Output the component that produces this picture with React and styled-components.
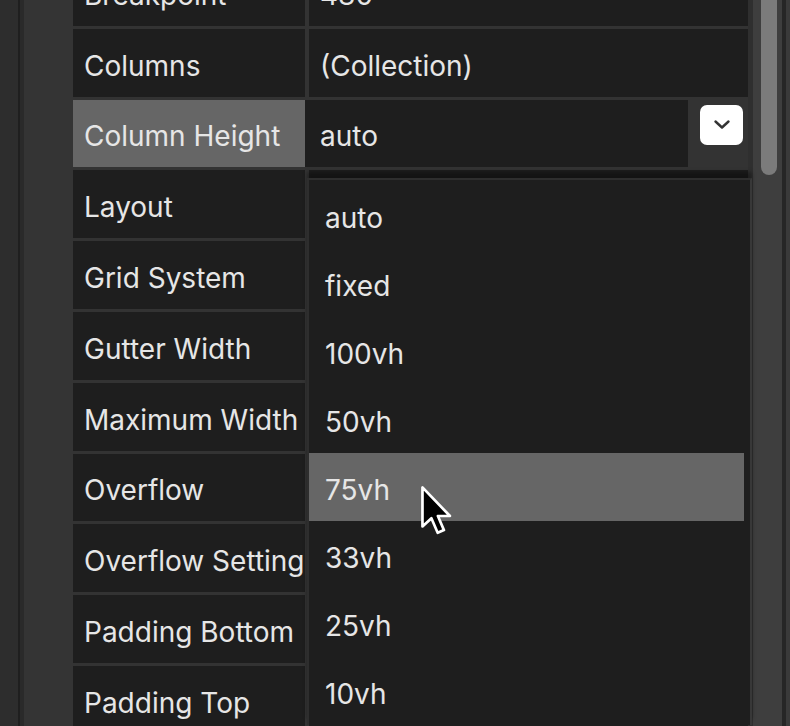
import React from "react";
import styled, { createGlobalStyle } from "styled-components";

const GlobalStyle = createGlobalStyle`
  html, body {
    margin: 0;
    padding: 0;
    background: #333333;
    overflow: hidden;
  }
  * { box-sizing: border-box; }
`;

const StPage = styled.div`
  position: relative;
  display: flex;
  width: 790px;
  height: 726px;
  overflow: hidden;
  background: #333333;
  font-family: Inter, "Noto Sans", sans-serif;
  font-size: 28px;
  color: #e6e6e6;
  -webkit-font-smoothing: antialiased;
`;

const StStrip = styled.div`
  flex: 0 0 ${(p) => p.$w}px;
  background: ${(p) => p.$bg};
`;

const StSheet = styled.div`
  position: relative;
  flex: 0 0 675px;
  display: flex;
  flex-direction: column;
  gap: 3px;
  margin-top: -42px;
  background: #333333;
`;

const StRow = styled.div`
  flex: 0 0 67.8px;
  display: grid;
  grid-template-columns: 232px 1fr;
  column-gap: ${(p) => (p.$editing ? 0 : 4)}px;
`;

const StCell = styled.div`
  display: flex;
  align-items: center;
  padding: 6px 0 0 ${(p) => p.$pad}px;
  background: ${(p) => (p.$active ? "#666666" : "#1e1e1e")};
  white-space: nowrap;
  overflow: hidden;
`;

const StEditor = styled.div`
  display: grid;
  grid-template-columns: 1fr 60px;
  background: #333333;
`;

const StSelectButton = styled.div`
  width: 43px;
  height: 40px;
  margin: 5px 5px 0 12px;
  border-radius: 7px;
  background: #ffffff;
  display: flex;
  align-items: center;
  justify-content: center;
`;

const StDropdown = styled.div`
  position: absolute;
  z-index: 2;
  top: 220px;
  left: 234px;
  width: 445px;
  padding: 1px 6px 0 0;
  background: #1e1e1e;
  border: 2px solid #2e2e2e;
  border-right-color: #383838;
  border-bottom: none;
  box-shadow: 0 -6px 4px rgba(0, 0, 0, 0.35);
`;

const StOption = styled.div`
  height: 68px;
  display: flex;
  align-items: center;
  padding: 5px 0 0 16px;
  background: ${(p) => (p.$active ? "#666666" : "transparent")};
`;

const StTrack = styled.div`
  flex: 0 0 29px;
  background: #3e3e3e;
  padding-left: 8px;
`;

const StThumb = styled.div`
  width: 16px;
  height: 215px;
  margin-top: -40px;
  border-radius: 8px;
  background: #7b7b7b;
`;

const StPointer = styled.svg`
  position: absolute;
  z-index: 3;
  left: 418px;
  top: 484px;
`;

const rows = [
  ["Breakpoint", "480"],
  ["Columns", "(Collection)"],
  ["Column Height", "auto", true],
  ["Layout", ""],
  ["Grid System", ""],
  ["Gutter Width", ""],
  ["Maximum Width", ""],
  ["Overflow", ""],
  ["Overflow Setting", ""],
  ["Padding Bottom", ""],
  ["Padding Top", ""],
];

const options = ["auto", "fixed", "100vh", "50vh", "75vh", "33vh", "25vh", "10vh"];

const App = () => {
  return (
    <StPage>
      <GlobalStyle />
      <StStrip $w={18} $bg="#2d2d2d" />
      <StStrip $w={2} $bg="#1f1f1f" />
      <StStrip $w={4} $bg="#2a2a2a" />
      <StStrip $w={49} $bg="#343434" />
      <StSheet>
        {rows.map(([label, value, editing]) => (
          <StRow key={label} $editing={editing}>
            <StCell $pad={11} $active={editing}>{label}</StCell>
            {editing ? (
              <StEditor>
                <StCell $pad={15}>{value}</StCell>
                <div>
                  <StSelectButton>
                    <svg width="18" height="11" viewBox="0 0 18 11">
                      <polyline
                        points="2.5,2.5 9,8.5 15.5,2.5"
                        fill="none"
                        stroke="#333"
                        strokeWidth="2.4"
                        strokeLinecap="round"
                        strokeLinejoin="round"
                      />
                    </svg>
                  </StSelectButton>
                </div>
              </StEditor>
            ) : (
              <StCell $pad={11}>{value}</StCell>
            )}
          </StRow>
        ))}
        <StDropdown>
          {options.map((o) => (
            <StOption key={o} $active={o === "75vh"}>{o}</StOption>
          ))}
        </StDropdown>
      </StSheet>
      <StStrip $w={5} $bg="#2f2f2f" />
      <StTrack>
        <StThumb />
      </StTrack>
      <StStrip $w={4} $bg="#262626" />
      <StStrip $w={4} $bg="#3a3a3a" />
      <StPointer width="38" height="56" viewBox="0 0 17 25">
        <path
          d="M2 1.5 L2 19 L6 15.3 L8.8 21.8 L11.6 20.6 L8.9 14.3 L14.3 14.3 Z"
          fill="#000"
          stroke="#fff"
          strokeWidth="1.2"
          strokeLinejoin="round"
        />
      </StPointer>
    </StPage>
  );
};

export default App;
